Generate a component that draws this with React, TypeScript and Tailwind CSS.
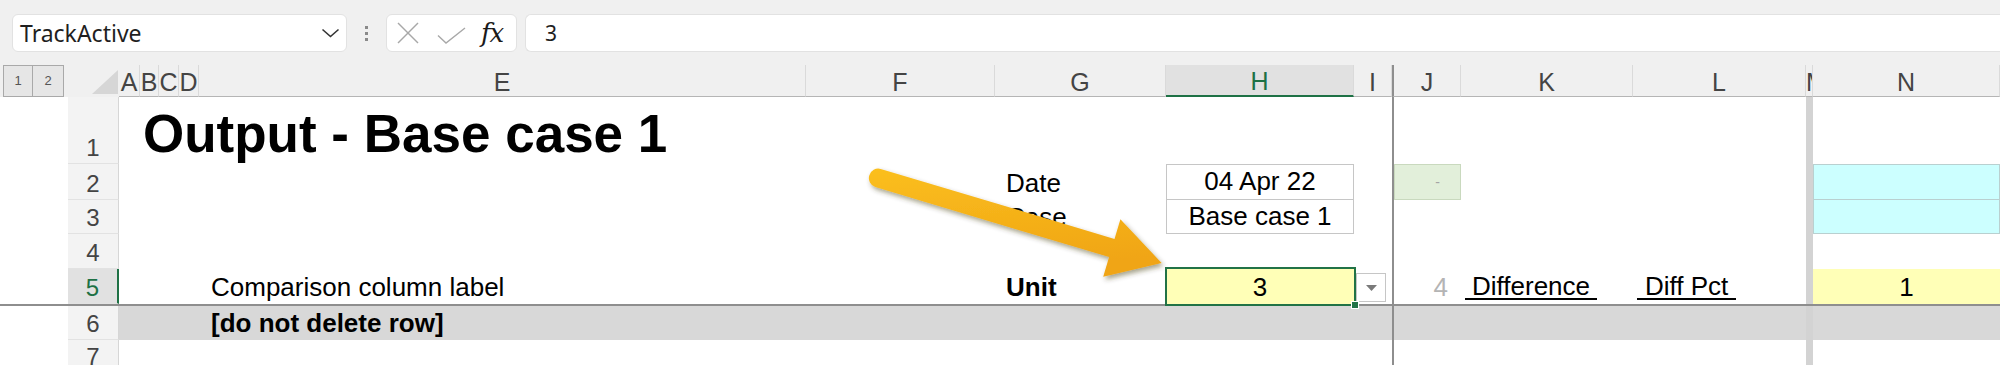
import React from 'react';

type Col = 'A' | 'B' | 'C' | 'D' | 'E' | 'F' | 'G' | 'H' | 'I' | 'J' | 'K' | 'L' | 'M' | 'N';
const COLS: Col[] = ['A', 'B', 'C', 'D', 'E', 'F', 'G', 'H', 'I', 'J', 'K', 'L', 'M', 'N'];
const W: Record<Col, string> = {
  A: 'w-[21px]',
  B: 'w-[19px]',
  C: 'w-[20px]',
  D: 'w-[20px]',
  E: 'w-[607px]',
  F: 'w-[189px]',
  G: 'w-[171px]',
  H: 'w-[188px]',
  I: 'w-[38px]',
  J: 'w-[69px]',
  K: 'w-[172px]',
  L: 'w-[173px]',
  M: 'w-[7px]',
  N: 'w-[187px]',
};

type Content = Partial<Record<Col, { cls?: string; node?: React.ReactNode }>>;

function Row({
  h,
  num,
  active,
  band,
  freeze,
  content,
}: {
  h: string;
  num: string;
  active?: boolean;
  band?: boolean;
  freeze?: boolean;
  content: Content;
}) {
  return (
    <div className={`flex ${h} ${freeze ? 'border-t-2 border-[#8e8e8e]' : ''}`}>
      <div className="w-[68px] shrink-0 h-full bg-white" />
      <div
        className={`w-[51px] shrink-0 h-full flex items-end justify-center pb-[1px] text-[24px] leading-[28px] border-b border-[#e2e2e2] ${
          active
            ? 'bg-[#e1e1e1] text-[#1e7145] border-r-2 border-r-[#1e7145]'
            : 'bg-[#f3f3f3] text-[#444] border-r border-r-[#d6d6d6]'
        }`}
      >
        {num}
      </div>
      {COLS.map((c) => {
        const ct = content[c];
        return (
          <div
            key={c}
            className={`${W[c]} shrink-0 h-full flex items-end ${
              c === 'J' ? 'border-l-2 border-l-[#8e8e8e]' : ''
            } ${c === 'M' ? 'bg-[#d3d3d3]' : band ? 'bg-[#d8d8d8]' : ''} ${ct?.cls ?? ''}`}
          >
            {ct?.node}
          </div>
        );
      })}
    </div>
  );
}

function Arrow() {
  return (
    <svg
      className="absolute left-[860px] top-[150px] w-[320px] h-[150px] z-20"
      viewBox="0 0 320 150"
    >
      <defs>
        <linearGradient id="ag" x1="0" y1="0" x2="0.25" y2="1">
          <stop offset="0" stopColor="#fbbf1e" />
          <stop offset="1" stopColor="#f0a514" />
        </linearGradient>
        <filter id="sh" x="-10%" y="-20%" width="130%" height="160%">
          <feDropShadow dx="2" dy="3" stdDeviation="2.5" floodColor="#3a3000" floodOpacity="0.45" />
        </filter>
      </defs>
      <path
        d="M 20.7 18.9 L 254.5 88.9 L 260.4 69.3 L 301.6 113 L 243.2 126.7 L 249.1 107.1 L 15.3 37.1 A 9.5 9.5 0 0 1 20.7 18.9 Z"
        fill="url(#ag)"
        filter="url(#sh)"
      />
    </svg>
  );
}

export default function App() {
  const cellFont = "font-['Liberation_Sans',Arial,sans-serif]";
  return (
    <div className={`relative w-[2000px] h-[365px] overflow-hidden bg-white ${cellFont} text-black`}>
      {/* Toolbar */}
      <div className="h-[65px] bg-[#f0f0f0] flex items-start pt-[14px] pl-[12px]">
        <div className="w-[335px] h-[38px] shrink-0 bg-white rounded-[6px] border border-[#e2e2e2] flex items-center justify-between pl-[7px] pr-[6px]">
          <span className="font-['Noto_Sans',sans-serif] text-[23px] leading-[30px] text-[#1f1f1f]">TrackActive</span>
          <svg width="19" height="10" viewBox="0 0 19 10">
            <polyline points="1.5,1.5 9.5,8.5 17.5,1.5" fill="none" stroke="#333" strokeWidth="1.6" />
          </svg>
        </div>
        <div className="w-[39px] h-[38px] shrink-0 flex flex-col items-center justify-center gap-[3px]">
          <div className="w-[3px] h-[3px] bg-[#8a8a8a]" />
          <div className="w-[3px] h-[3px] bg-[#8a8a8a]" />
          <div className="w-[3px] h-[3px] bg-[#8a8a8a]" />
        </div>
        <div className="w-[131px] h-[38px] shrink-0 bg-white rounded-[6px] border border-[#e2e2e2] flex items-center pl-[10px]">
          <svg width="22" height="22" viewBox="0 0 22 22" className="shrink-0">
            <line x1="1" y1="1" x2="21" y2="21" stroke="#a8a8a8" strokeWidth="1.4" />
            <line x1="21" y1="1" x2="1" y2="21" stroke="#a8a8a8" strokeWidth="1.4" />
          </svg>
          <svg width="29" height="17" viewBox="0 0 29 17" className="shrink-0 ml-[18px] mt-[4px]">
            <polyline points="1,8.5 9,16 28,1" fill="none" stroke="#a8a8a8" strokeWidth="1.4" />
          </svg>
          <span className="ml-[15px] font-['DejaVu_Serif','Liberation_Serif',serif] italic text-[26px] leading-[30px] text-[#1a1a1a] tracking-[-1px]">
            fx
          </span>
        </div>
        <div className="ml-[8px] flex-1 h-[38px] bg-white rounded-l-[6px] border border-r-0 border-[#e2e2e2] flex items-center pl-[19px]">
          <span className="font-['Noto_Sans',sans-serif] text-[21px] leading-[30px] text-[#1f1f1f]">3</span>
        </div>
      </div>

      {/* Column headers */}
      <div className="flex h-[32px] bg-[#f0f0f0]">
        <div className="w-[68px] shrink-0 h-full flex pl-[3px]">
          <div className="w-[30px] h-full bg-[#e6e6e6] border border-[#a9a9a9] flex items-center justify-center text-[13px] text-[#555]">
            1
          </div>
          <div className="w-[31px] h-full bg-[#e6e6e6] border border-l-0 border-[#a9a9a9] flex items-center justify-center text-[13px] text-[#555]">
            2
          </div>
        </div>
        <div className="w-[51px] shrink-0 h-full">
          <svg width="51" height="32" viewBox="0 0 51 32">
            <polygon points="24,29 50,29 50,5" fill="#d6d6d6" />
          </svg>
        </div>
        {COLS.map((c) => (
          <div
            key={c}
            className={`${W[c]} shrink-0 h-full flex items-end overflow-hidden text-[25px] leading-[28px] border-r border-[#dadada] ${
              c === 'M' ? 'justify-start' : 'justify-center'
            } ${
              c === 'H'
                ? 'bg-[#e1e1e1] text-[#1e7145] border-b-2 border-b-[#1e7145]'
                : 'text-[#444] border-b border-b-[#b5b5b5]'
            } ${c === 'J' ? 'border-l-2 border-l-[#8e8e8e]' : ''}`}
          >
            {c}
          </div>
        ))}
      </div>

      {/* Row 1 */}
      <Row
        h="h-[67px]"
        num="1"
        content={{
          A: {
            node: (
              <span className="ml-[24px] whitespace-nowrap font-bold text-[53px] leading-[61px]">
                Output - Base case 1
              </span>
            ),
          },
        }}
      />
      {/* Row 2 */}
      <Row
        h="h-[36px]"
        num="2"
        content={{
          G: { cls: 'pl-[11px] pb-[2px]', node: <span className="text-[26px] leading-[30px]">Date</span> },
          H: {
            cls: 'border border-[#c6c6c6] justify-center pb-[3px]',
            node: <span className="text-[26px] leading-[30px]">04 Apr 22</span>,
          },
          J: {
            node: (
              <div className="w-full h-full bg-[#e2efda] border border-[#c9d9be] flex items-center justify-end pr-[20px] text-[14px] text-[#a5a5a5]">
                -
              </div>
            ),
          },
          N: { cls: 'bg-[#ccffff] border border-[#b9d0d0]' },
        }}
      />
      {/* Row 3 */}
      <Row
        h="h-[34px]"
        num="3"
        content={{
          G: { cls: 'pl-[11px] pb-[2px]', node: <span className="text-[26px] leading-[30px]">Case</span> },
          H: {
            cls: 'border border-t-0 border-[#c6c6c6] justify-center pb-[2px]',
            node: <span className="text-[26px] leading-[30px]">Base case 1</span>,
          },
          N: { cls: 'bg-[#ccffff] border border-t-0 border-[#b9d0d0]' },
        }}
      />
      {/* Row 4 */}
      <Row h="h-[35px]" num="4" content={{}} />
      {/* Row 5 */}
      <Row
        h="h-[35px]"
        num="5"
        active
        content={{
          E: {
            cls: 'pl-[12px] pb-[2px]',
            node: <span className="text-[26px] leading-[30px] whitespace-nowrap">Comparison column label</span>,
          },
          G: {
            cls: 'pl-[11px] pb-[2px]',
            node: <span className="text-[26px] leading-[30px] font-bold">Unit</span>,
          },
          H: {
            cls: 'relative bg-[#ffffb7] justify-center pb-[2px]',
            node: (
              <>
                <span className="text-[26px] leading-[30px]">3</span>
                <div className="absolute -left-[1px] -right-[2px] -top-[2px] -bottom-[2px] border-2 border-[#217346] z-10" />
                <div className="absolute -right-[5px] -bottom-[5px] w-[8px] h-[8px] bg-[#217346] border border-white z-10" />
              </>
            ),
          },
          I: {
            cls: '!items-start',
            node: (
              <div className="ml-[2px] mt-[4px] w-[30px] h-[29px] bg-white border border-[#c6c6c6] flex items-center justify-center">
                <svg width="11" height="6" viewBox="0 0 11 6">
                  <polygon points="0,0 11,0 5.5,6" fill="#7a7a7a" />
                </svg>
              </div>
            ),
          },
          J: {
            cls: 'justify-end pr-[13px] pb-[2px]',
            node: <span className="text-[26px] leading-[30px] text-[#b4b4b4]">4</span>,
          },
          K: {
            cls: 'pb-[4px]',
            node: (
              <span className="ml-[4px] px-[7px] text-[26px] leading-[24px] border-b-2 border-black whitespace-nowrap">
                Difference
              </span>
            ),
          },
          L: {
            cls: 'pb-[4px]',
            node: (
              <span className="ml-[4px] px-[8px] text-[26px] leading-[24px] border-b-2 border-black whitespace-nowrap">
                Diff Pct
              </span>
            ),
          },
          N: {
            cls: 'bg-[#ffffb7] justify-center pb-[2px]',
            node: <span className="text-[26px] leading-[30px]">1</span>,
          },
        }}
      />
      {/* Row 6 */}
      <Row
        h="h-[36px]"
        num="6"
        band
        freeze
        content={{
          E: {
            cls: 'pl-[12px] pb-[2px]',
            node: <span className="text-[26px] leading-[30px] font-bold whitespace-nowrap">[do not delete row]</span>,
          },
        }}
      />
      {/* Row 7 */}
      <Row h="h-[33px]" num="7" content={{}} />

      <Arrow />
    </div>
  );
}
